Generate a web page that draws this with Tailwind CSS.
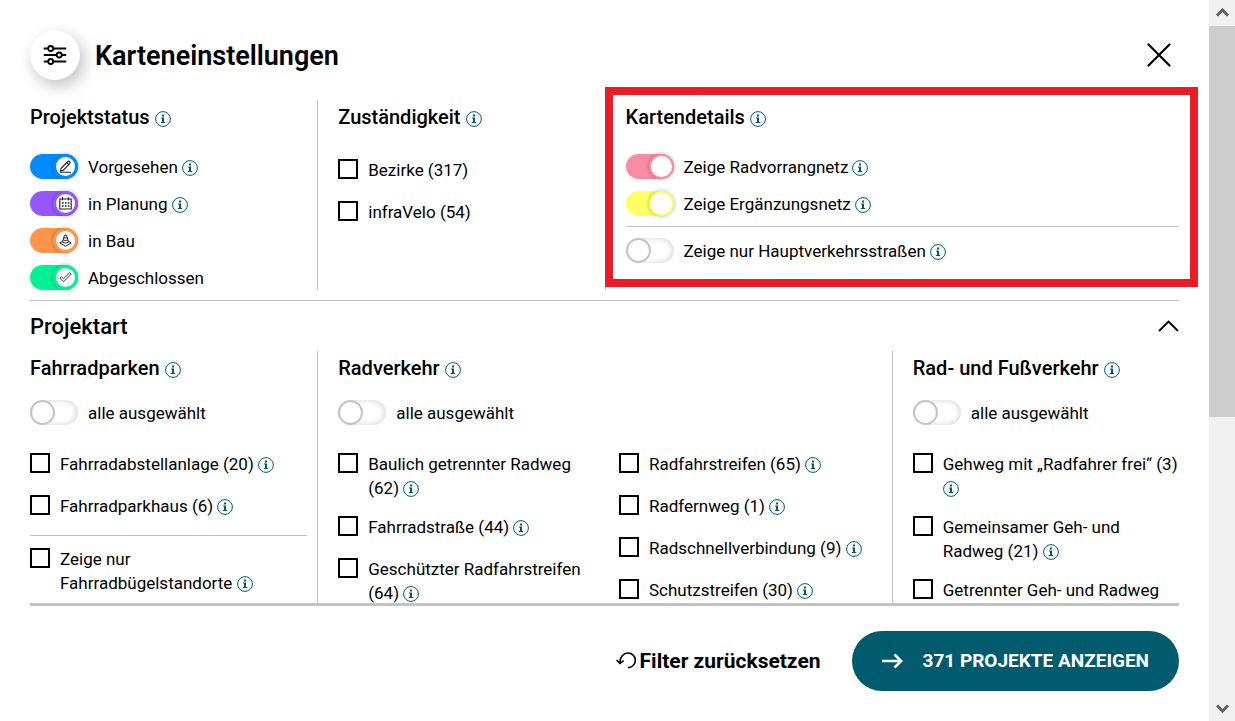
<!DOCTYPE html>
<html lang="de">
<head>
    <meta charset="UTF-8">
    <meta name="viewport" content="width=device-width, initial-scale=1.0">
    <title>Karteneinstellungen</title>
    <script src="https://cdn.jsdelivr.net/npm/@tailwindcss/browser@4"></script>
</head>
<body class="bg-white text-black font-['Roboto',sans-serif] text-[17px] leading-6">
    <svg class="hidden">
        <symbol id="info" viewBox="0 0 16 16">
            <circle cx="8" cy="8" r="7.4" fill="none" stroke="currentColor" stroke-width="1"/>
            <path d="M7 3.6h2v1.8H7zM6 6.6h3v4.4h1.2v1H5.8v-1H7V7.6H6z" fill="currentColor"/>
        </symbol>
    </svg>

    <div class="flex h-screen overflow-hidden">
        <main class="flex min-w-0 flex-1 flex-col px-[30px]">
            <header class="flex items-center pt-[30px]">
                <div class="flex size-[50px] items-center justify-center rounded-full bg-white shadow-[4px_6px_16px_rgba(0,0,0,0.25)]">
                    <svg class="size-6" viewBox="0 0 24 24" fill="none" stroke="#000" stroke-width="1.8" stroke-linecap="round">
                        <path d="M1.5 5.5h3.500M10.500 5.500h12M1.500 12h12M19 12h3.500M1.500 18.500h3.500M10.500 18.500h12"/>
                        <circle cx="7.700" cy="5.500" r="2.500"/>
                        <circle cx="16.200" cy="12" r="2.500"/>
                        <circle cx="7.700" cy="18.500" r="2.500"/>
                    </svg>
                </div>
                <h1 class="ml-[15px] pt-0.5 text-[27px] leading-10 font-semibold">Karteneinstellungen</h1>
                <button type="button" aria-label="Schließen" class="mr-2 ml-auto">
                    <svg class="size-6" viewBox="0 0 24 24" fill="none" stroke="#000" stroke-width="2.200" stroke-linecap="round"><path d="M1.500 1.500l21 21M22.500 1.500l-21 21"/></svg>
                </button>
            </header>

            <!-- scrollable filter area -->
            <div class="-mx-5 min-h-0 flex-1 overflow-hidden px-5 pt-5">
                <div class="grid grid-cols-4">
                    <section>
                        <h2 class="text-xl leading-[34px] font-medium">Projektstatus <button type="button" aria-label="Info" class="inline-block align-[-3px] text-[#005b6e]"><svg class="size-4"><use href="#info"/></svg></button></h2>
                        <div class="mt-5 flex flex-col gap-3">
                            <div class="flex h-[25px] items-center">
                                <span class="relative mr-2.5 flex">
                                    <input id="vorgesehen" type="checkbox" checked class="h-[25px] w-12 appearance-none rounded-full bg-[#008cff] after:ml-auto after:block after:size-[25px] after:rounded-full after:border-3 after:border-[#008cff] after:bg-white after:shadow-[0_0_4px_rgba(0,0,0,0.3)]">
                                    <svg class="pointer-events-none absolute top-1.5 right-1.5 size-[13px]" viewBox="0 0 13 13" fill="none" stroke="#222" stroke-width="1.100"><path d="M2 8.500L8.800 1.500Q9.800.8 10.700 1.700T10.900 3.500L4.300 10.200L1.500 10.900zM7.700 2.600l2 2M1 12.300h11"/></svg>
                                </span>
                                <label for="vorgesehen">Vorgesehen</label>
                                <button type="button" aria-label="Info" class="ml-1 text-[#005b6e]"><svg class="mt-0.5 size-4"><use href="#info"/></svg></button>
                            </div>
                            <div class="flex h-[25px] items-center">
                                <span class="relative mr-2.5 flex">
                                    <input id="planung" type="checkbox" checked class="h-[25px] w-12 appearance-none rounded-full bg-[#9757ff] after:ml-auto after:block after:size-[25px] after:rounded-full after:border-3 after:border-[#9757ff] after:bg-white after:shadow-[0_0_4px_rgba(0,0,0,0.3)]">
                                    <svg class="pointer-events-none absolute top-1.5 right-1.5 size-[13px]" viewBox="0 0 13 13" fill="none" stroke="#222" stroke-width="1.100"><path d="M.8 2h11.400v10H.8zM3.500.3v3M9.500.3v3"/><path d="M3 6h7.500M3 9h7.500" stroke-width="1.700" stroke-dasharray="1.600 1.300"/></svg>
                                </span>
                                <label for="planung">in Planung</label>
                                <button type="button" aria-label="Info" class="ml-1 text-[#005b6e]"><svg class="mt-0.5 size-4"><use href="#info"/></svg></button>
                            </div>
                            <div class="flex h-[25px] items-center">
                                <span class="relative mr-2.5 flex">
                                    <input id="bau" type="checkbox" checked class="h-[25px] w-12 appearance-none rounded-full bg-[#ff954a] after:ml-auto after:block after:size-[25px] after:rounded-full after:border-3 after:border-[#ff954a] after:bg-white after:shadow-[0_0_4px_rgba(0,0,0,0.3)]">
                                    <svg class="pointer-events-none absolute top-1.5 right-1.5 size-[13px]" viewBox="0 0 13 13" fill="none" stroke="#222" stroke-width="1"><path d="M5.500 1.200h2l2 7q-3 1.800-6 0zM4.900 3.700q1.600.8 3.200 0M4.200 6q2.300 1.200 4.600 0M3.500 7.300L.8 9l5.700 3.200L12.200 9 9.500 7.300"/></svg>
                                </span>
                                <label for="bau">in Bau</label>
                            </div>
                            <div class="flex h-[25px] items-center">
                                <span class="relative mr-2.5 flex">
                                    <input id="abgeschlossen" type="checkbox" checked class="h-[25px] w-12 appearance-none rounded-full bg-[#00f294] after:ml-auto after:block after:size-[25px] after:rounded-full after:border-3 after:border-[#00f294] after:bg-white after:shadow-[0_0_4px_rgba(0,0,0,0.3)]">
                                    <svg class="pointer-events-none absolute top-1.5 right-1.5 size-[13px]" viewBox="0 0 13 13" fill="none" stroke="#222" stroke-width=".9"><path d="M.9 7.200l1.500-1.500 2.200 2 6.100-6 1.500 1.400-7.600 7.600z"/></svg>
                                </span>
                                <label for="abgeschlossen">Abgeschlossen</label>
                            </div>
                        </div>
                    </section>

                    <section class="border-l border-[#c3c3c3] pl-5">
                        <h2 class="text-xl leading-[34px] font-medium">Zuständigkeit <button type="button" aria-label="Info" class="inline-block align-[-3px] text-[#005b6e]"><svg class="size-4"><use href="#info"/></svg></button></h2>
                        <div class="mt-6 flex flex-col gap-[15px]">
                            <div class="flex min-h-[27px] items-start gap-2.5">
                                <input id="bezirke" type="checkbox" class="mt-px size-5 shrink-0 appearance-none border-2 border-black">
                                <label for="bezirke">Bezirke (317)</label>
                            </div>
                            <div class="flex min-h-[27px] items-start gap-2.5">
                                <input id="infravelo" type="checkbox" class="mt-px size-5 shrink-0 appearance-none border-2 border-black">
                                <label for="infravelo">infraVelo (54)</label>
                            </div>
                        </div>
                    </section>

                    <section class="relative col-span-2 border-l border-[#c3c3c3] pl-5">
                        <div class="pointer-events-none absolute -top-[13px] -right-[19px] bottom-[3px] -left-px border-8 border-[#ed1c24]"></div>
                        <h2 class="text-xl leading-[34px] font-medium">Kartendetails <button type="button" aria-label="Info" class="inline-block align-[-3px] text-[#005b6e]"><svg class="size-4"><use href="#info"/></svg></button></h2>
                        <div class="mt-5 flex flex-col gap-3">
                            <div class="flex h-[25px] items-center">
                                <input id="vorrangnetz" type="checkbox" checked class="mr-2.5 h-[25px] w-12 appearance-none rounded-full bg-[#f98ca3] after:ml-auto after:block after:size-[25px] after:rounded-full after:border-2 after:border-[#f98ca3] after:bg-white after:shadow-[0_0_4px_rgba(0,0,0,0.3)]">
                                <label for="vorrangnetz">Zeige Radvorrangnetz</label>
                                <button type="button" aria-label="Info" class="ml-1 text-[#005b6e]"><svg class="mt-0.5 size-4"><use href="#info"/></svg></button>
                            </div>
                            <div class="flex h-[25px] items-center">
                                <input id="ergaenzungsnetz" type="checkbox" checked class="mr-2.5 h-[25px] w-12 appearance-none rounded-full bg-[#ffff66] after:ml-auto after:block after:size-[25px] after:rounded-full after:border-2 after:border-[#ffff66] after:bg-white after:shadow-[0_0_4px_rgba(0,0,0,0.3)]">
                                <label for="ergaenzungsnetz">Zeige Ergänzungsnetz</label>
                                <button type="button" aria-label="Info" class="ml-1 text-[#005b6e]"><svg class="mt-0.5 size-4"><use href="#info"/></svg></button>
                            </div>
                        </div>
                        <hr class="my-[10px] border-[#c3c3c3]">
                        <div class="flex h-[27px] items-center">
                            <input id="hauptstrassen" type="checkbox" class="mr-2.5 h-[25px] w-12 appearance-none rounded-full bg-white shadow-[inset_-1px_0_6px_rgba(0,0,0,0.18)] after:block after:size-[25px] after:rounded-full after:border-2 after:border-[#c3c3c3] after:bg-white">
                            <label for="hauptstrassen">Zeige nur Hauptverkehrsstraßen</label>
                            <button type="button" aria-label="Info" class="ml-1 text-[#005b6e]"><svg class="mt-0.5 size-4"><use href="#info"/></svg></button>
                        </div>
                    </section>
                </div>

                <div class="mt-2.5 flex h-[51px] items-center justify-between border-t border-[#c3c3c3]">
                    <h2 class="pt-0.5 text-[22px] font-medium">Projektart</h2>
                    <button type="button" aria-label="Projektart einklappen">
                        <svg class="h-3 w-[21px]" viewBox="0 0 21 12" fill="none" stroke="#000" stroke-width="1.800"><path d="M1 11l9.500-9.500L20 11"/></svg>
                    </button>
                </div>

                <div class="grid grid-cols-4">
                    <section class="pr-2.5">
                        <h3 class="text-xl leading-[34px] font-medium">Fahrradparken <button type="button" aria-label="Info" class="inline-block align-[-3px] text-[#005b6e]"><svg class="size-4"><use href="#info"/></svg></button></h3>
                        <div class="mt-[15px] flex h-[25px] items-center">
                            <input id="alle-parken" type="checkbox" class="mr-2.5 h-[25px] w-12 appearance-none rounded-full bg-white shadow-[inset_-1px_0_6px_rgba(0,0,0,0.18)] after:block after:size-[25px] after:rounded-full after:border-2 after:border-[#c3c3c3] after:bg-white">
                            <label for="alle-parken">alle ausgewählt</label>
                        </div>
                        <div class="mt-[27px] flex flex-col gap-[15px]">
                            <div class="flex min-h-[27px] items-start gap-2.5">
                                <input id="abstellanlage" type="checkbox" class="mt-px size-5 shrink-0 appearance-none border-2 border-black">
                                <p><label for="abstellanlage">Fahrradabstellanlage (20)</label> <button type="button" aria-label="Info" class="inline-block align-[-3px] text-[#005b6e]"><svg class="size-4"><use href="#info"/></svg></button></p>
                            </div>
                            <div class="flex min-h-[27px] items-start gap-2.5">
                                <input id="parkhaus" type="checkbox" class="mt-px size-5 shrink-0 appearance-none border-2 border-black">
                                <p><label for="parkhaus">Fahrradparkhaus (6)</label> <button type="button" aria-label="Info" class="inline-block align-[-3px] text-[#005b6e]"><svg class="size-4"><use href="#info"/></svg></button></p>
                            </div>
                        </div>
                        <hr class="mt-3.5 mb-[11px] border-[#c3c3c3]">
                        <div class="flex min-h-[27px] items-start gap-2.5">
                            <input id="buegel" type="checkbox" class="mt-px size-5 shrink-0 appearance-none border-2 border-black">
                            <p><label for="buegel">Zeige nur<br>Fahrradbügelstandorte</label> <button type="button" aria-label="Info" class="inline-block align-[-3px] text-[#005b6e]"><svg class="size-4"><use href="#info"/></svg></button></p>
                        </div>
                    </section>

                    <section class="col-span-2 border-l border-[#c3c3c3] pl-5">
                        <h3 class="text-xl leading-[34px] font-medium">Radverkehr <button type="button" aria-label="Info" class="inline-block align-[-3px] text-[#005b6e]"><svg class="size-4"><use href="#info"/></svg></button></h3>
                        <div class="mt-[15px] flex h-[25px] items-center">
                            <input id="alle-rad" type="checkbox" class="mr-2.5 h-[25px] w-12 appearance-none rounded-full bg-white shadow-[inset_-1px_0_6px_rgba(0,0,0,0.18)] after:block after:size-[25px] after:rounded-full after:border-2 after:border-[#c3c3c3] after:bg-white">
                            <label for="alle-rad">alle ausgewählt</label>
                        </div>
                        <div class="mt-[27px] grid grid-cols-2 gap-2">
                            <div class="flex flex-col gap-[15px]">
                                <div class="flex min-h-[27px] items-start gap-2.5">
                                    <input id="radweg" type="checkbox" class="mt-px size-5 shrink-0 appearance-none border-2 border-black">
                                    <p><label for="radweg">Baulich getrennter Radweg<br>(62)</label> <button type="button" aria-label="Info" class="inline-block align-[-3px] text-[#005b6e]"><svg class="size-4"><use href="#info"/></svg></button></p>
                                </div>
                                <div class="flex min-h-[27px] items-start gap-2.5">
                                    <input id="fahrradstrasse" type="checkbox" class="mt-px size-5 shrink-0 appearance-none border-2 border-black">
                                    <p><label for="fahrradstrasse">Fahrradstraße (44)</label> <button type="button" aria-label="Info" class="inline-block align-[-3px] text-[#005b6e]"><svg class="size-4"><use href="#info"/></svg></button></p>
                                </div>
                                <div class="flex min-h-[27px] items-start gap-2.5">
                                    <input id="geschuetzt" type="checkbox" class="mt-px size-5 shrink-0 appearance-none border-2 border-black">
                                    <p><label for="geschuetzt">Geschützter Radfahrstreifen<br>(64)</label> <button type="button" aria-label="Info" class="inline-block align-[-3px] text-[#005b6e]"><svg class="size-4"><use href="#info"/></svg></button></p>
                                </div>
                            </div>
                            <div class="flex flex-col gap-[15px]">
                                <div class="flex min-h-[27px] items-start gap-2.5">
                                    <input id="streifen" type="checkbox" class="mt-px size-5 shrink-0 appearance-none border-2 border-black">
                                    <p><label for="streifen">Radfahrstreifen (65)</label> <button type="button" aria-label="Info" class="inline-block align-[-3px] text-[#005b6e]"><svg class="size-4"><use href="#info"/></svg></button></p>
                                </div>
                                <div class="flex min-h-[27px] items-start gap-2.5">
                                    <input id="fernweg" type="checkbox" class="mt-px size-5 shrink-0 appearance-none border-2 border-black">
                                    <p><label for="fernweg">Radfernweg (1)</label> <button type="button" aria-label="Info" class="inline-block align-[-3px] text-[#005b6e]"><svg class="size-4"><use href="#info"/></svg></button></p>
                                </div>
                                <div class="flex min-h-[27px] items-start gap-2.5">
                                    <input id="schnell" type="checkbox" class="mt-px size-5 shrink-0 appearance-none border-2 border-black">
                                    <p><label for="schnell">Radschnellverbindung (9)</label> <button type="button" aria-label="Info" class="inline-block align-[-3px] text-[#005b6e]"><svg class="size-4"><use href="#info"/></svg></button></p>
                                </div>
                                <div class="flex min-h-[27px] items-start gap-2.5">
                                    <input id="schutz" type="checkbox" class="mt-px size-5 shrink-0 appearance-none border-2 border-black">
                                    <p><label for="schutz">Schutzstreifen (30)</label> <button type="button" aria-label="Info" class="inline-block align-[-3px] text-[#005b6e]"><svg class="size-4"><use href="#info"/></svg></button></p>
                                </div>
                            </div>
                        </div>
                    </section>

                    <section class="border-l border-[#c3c3c3] pl-5">
                        <h3 class="text-xl leading-[34px] font-medium whitespace-nowrap">Rad- und Fußverkehr <button type="button" aria-label="Info" class="inline-block align-[-3px] text-[#005b6e]"><svg class="size-4"><use href="#info"/></svg></button></h3>
                        <div class="mt-[15px] flex h-[25px] items-center">
                            <input id="alle-fuss" type="checkbox" class="mr-2.5 h-[25px] w-12 appearance-none rounded-full bg-white shadow-[inset_-1px_0_6px_rgba(0,0,0,0.18)] after:block after:size-[25px] after:rounded-full after:border-2 after:border-[#c3c3c3] after:bg-white">
                            <label for="alle-fuss">alle ausgewählt</label>
                        </div>
                        <div class="mt-[27px] flex flex-col gap-[15px]">
                            <div class="flex min-h-[27px] items-start gap-2.5">
                                <input id="gehweg" type="checkbox" class="mt-px size-5 shrink-0 appearance-none border-2 border-black">
                                <p><label for="gehweg">Gehweg mit „Radfahrer frei“ (3)</label> <button type="button" aria-label="Info" class="inline-block align-[-3px] text-[#005b6e]"><svg class="size-4"><use href="#info"/></svg></button></p>
                            </div>
                            <div class="flex min-h-[27px] items-start gap-2.5">
                                <input id="gemeinsam" type="checkbox" class="mt-px size-5 shrink-0 appearance-none border-2 border-black">
                                <p><label for="gemeinsam">Gemeinsamer Geh- und Radweg (21)</label> <button type="button" aria-label="Info" class="inline-block align-[-3px] text-[#005b6e]"><svg class="size-4"><use href="#info"/></svg></button></p>
                            </div>
                            <div class="flex min-h-[27px] items-start gap-2.5">
                                <input id="getrennt" type="checkbox" class="mt-px size-5 shrink-0 appearance-none border-2 border-black">
                                <p><label for="getrennt">Getrennter Geh- und Radweg</label></p>
                            </div>
                        </div>
                    </section>
                </div>
            </div>

            <footer class="flex items-center justify-end border-t-3 border-[#c3c3c3] pt-[25px] pb-[30px] font-bold">
                <button type="button" class="mr-[31px] flex items-center gap-1 text-[21px]">
                    <svg class="size-5" viewBox="0 0 20 20" fill="none" stroke="#000" stroke-width="1.600"><path d="M4 12C3.800 6 7.500 2 12 2A7.300 7.300 0 1 1 12 16.600M.6 9.200L4 12.400 7.600 9.600"/></svg>
                    Filter zurücksetzen
                </button>
                <button type="button" class="flex h-[60px] items-center gap-5 rounded-full bg-[#005b6e] px-[30px] text-[19px] text-white">
                    <svg class="h-4 w-[21px]" viewBox="0 0 21 16" fill="none" stroke="#fff" stroke-width="2.500"><path d="M0 8h19M12.500 1.500L19.200 8l-6.700 6.500"/></svg>
                    371 PROJEKTE ANZEIGEN
                </button>
            </footer>
        </main>

        <!-- scroll bar -->
        <div class="flex w-[26px] shrink-0 flex-col bg-[#f0f0f0]">
            <div class="flex h-[26px] items-center justify-center">
                <svg class="h-2.5 w-[13px]" viewBox="0 0 13 10" fill="none" stroke="#606060" stroke-width="3"><path d="M1 7.500L6.500 2 12 7.500"/></svg>
            </div>
            <div class="flex-[391] bg-[#cdcdcd]"></div>
            <div class="flex-[278]"></div>
            <div class="flex h-[26px] items-center justify-center">
                <svg class="h-2.5 w-[13px]" viewBox="0 0 13 10" fill="none" stroke="#606060" stroke-width="3"><path d="M1 2.500L6.500 8 12 2.500"/></svg>
            </div>
        </div>
    </div>
</body>
</html>
